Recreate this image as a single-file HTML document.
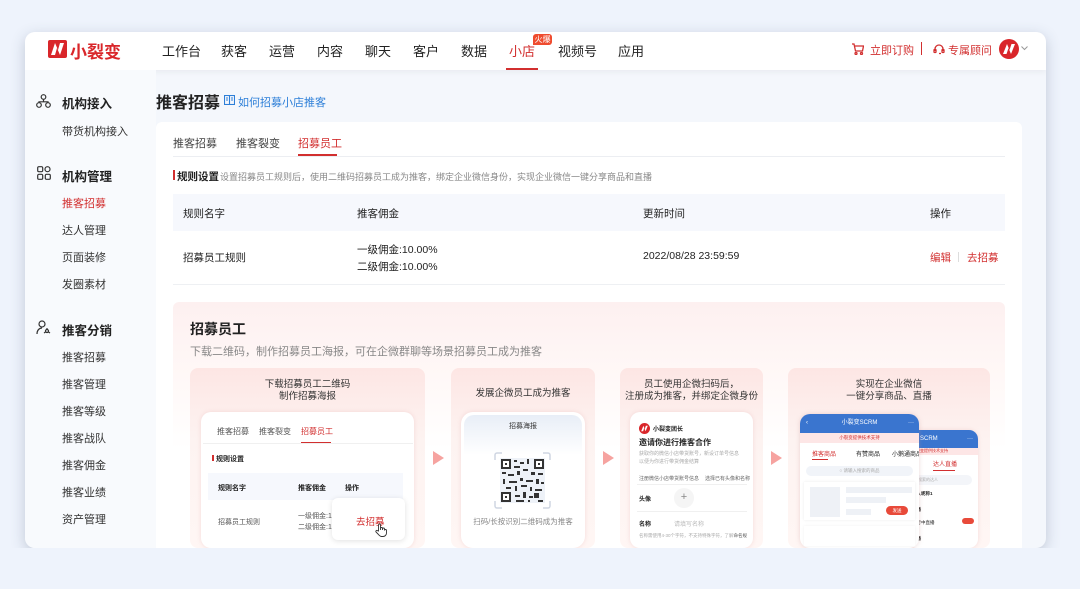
<!DOCTYPE html>
<html><head><meta charset="utf-8"><style>
*{margin:0;padding:0;box-sizing:border-box}
body{width:1080px;height:589px;background:#eef3fc;font-family:"Liberation Sans","Noto Sans CJK SC",sans-serif;position:relative;overflow:hidden;color:#222}
.a{position:absolute;white-space:nowrap}
#win{position:absolute;left:25px;top:32px;width:1021px;height:516px;border-radius:10px;overflow:hidden;background:#f4f7fc;box-shadow:0 4px 14px rgba(60,70,100,.25)}
#win .a{}
.nav{font-size:13px;color:#222;top:41px}
.sb{font-size:11px;color:#333;left:62px}
.sbh{font-size:12.5px;font-weight:bold;color:#222;left:62px}
.red{color:#d22f2f}
</style></head><body>
<div id="win">
<!-- header -->
<div class="a" style="left:0;top:0;width:1021px;height:38px;background:#fff;box-shadow:0 2px 6px rgba(0,0,0,.05)"></div>
<!-- sidebar -->
<div class="a" style="left:0;top:38px;width:131px;height:478px;background:#f8fafd"></div>
<!-- card -->
<div class="a" style="left:131px;top:90px;width:866px;height:440px;background:#fff;border-radius:6px"></div>
</div>

<!-- logo -->
<svg class="a" style="left:48px;top:40px" width="19" height="18" viewBox="0 0 19 18"><rect width="19" height="18" rx="2" fill="#d9262a"/><path d="M3 15 L7 3 L10 10 L12 3 L16 3 L12 15 L9 8 L7 15Z" fill="#fff"/></svg>
<div class="a" style="left:70px;top:38px;font-size:17px;font-weight:bold;color:#d9262a">小裂变</div>

<div class="a nav" style="left:162px">工作台</div>
<div class="a nav" style="left:221px">获客</div>
<div class="a nav" style="left:269px">运营</div>
<div class="a nav" style="left:317px">内容</div>
<div class="a nav" style="left:365px">聊天</div>
<div class="a nav" style="left:413px">客户</div>
<div class="a nav" style="left:461px">数据</div>
<div class="a nav red" style="left:509px">小店</div>
<div class="a" style="left:533px;top:34px;width:19px;height:11px;background:#ef4b2e;border-radius:3px 3px 3px 0;color:#fff;font-size:8px;line-height:11px;text-align:center">火爆</div>
<div class="a" style="left:506px;top:68px;width:32px;height:2px;background:#d22f2f"></div>
<div class="a nav" style="left:558px">视频号</div>
<div class="a nav" style="left:618px">应用</div>

<svg class="a" style="left:851px;top:43px" width="13" height="12" viewBox="0 0 13 12" fill="none" stroke="#d22f2f" stroke-width="1.3"><path d="M1 1h2l1.5 7h7l1-5H4"/><circle cx="5" cy="10.5" r="1"/><circle cx="10.5" cy="10.5" r="1"/></svg>
<div class="a red" style="left:870px;top:42px;font-size:11px">立即订购</div>
<div class="a" style="left:921px;top:42px;width:1px;height:13px;background:#d22f2f"></div>
<svg class="a" style="left:933px;top:43px" width="12" height="12" viewBox="0 0 12 12" fill="none" stroke="#d22f2f" stroke-width="1.3"><path d="M2 8V6a4 4 0 0 1 8 0v2M8 10.5h-2"/><rect x="1" y="6.5" width="2" height="3" rx=".5"/><rect x="9" y="6.5" width="2" height="3" rx=".5"/></svg>
<div class="a red" style="left:948px;top:42px;font-size:11px">专属顾问</div>
<svg class="a" style="left:999px;top:39px" width="20" height="20" viewBox="0 0 20 20"><circle cx="10" cy="10" r="10" fill="#d9262a"/><path d="M4 15 L8 5 L10.5 11 L12.5 5 L16 5 L12 15 L9.5 9 L7.5 15Z" fill="#fff"/></svg>
<svg class="a" style="left:1021px;top:46px" width="7" height="5"><path d="M.5 .5L3.5 3.5L6.5 .5" fill="none" stroke="#999"/></svg>

<!-- sidebar -->
<svg class="a" style="left:36px;top:94px" width="15" height="14" viewBox="0 0 15 14" fill="none" stroke="#333" stroke-width="1.2"><circle cx="7.5" cy="3" r="2.3"/><circle cx="3" cy="11" r="2.3"/><circle cx="12" cy="11" r="2.3"/><path d="M7.5 5.3v2.5M3 8.7V7.8h9v.9"/></svg>
<div class="a sbh" style="top:93px">机构接入</div>
<div class="a sb" style="top:123px">带货机构接入</div>
<svg class="a" style="left:37px;top:166px" width="14" height="14" viewBox="0 0 14 14" fill="none" stroke="#333" stroke-width="1.2"><rect x=".7" y=".7" width="5" height="5" rx="1.2"/><circle cx="10.5" cy="3.2" r="2.5"/><rect x=".7" y="8.3" width="5" height="5" rx="1.2"/><rect x="8.3" y="8.3" width="5" height="5" rx="1.2"/></svg>
<div class="a sbh" style="top:166px">机构管理</div>
<div class="a sb red" style="top:195px">推客招募</div>
<div class="a sb" style="top:222px">达人管理</div>
<div class="a sb" style="top:249px">页面装修</div>
<div class="a sb" style="top:276px">发圈素材</div>
<svg class="a" style="left:36px;top:320px" width="16" height="15" viewBox="0 0 16 15" fill="none" stroke="#333" stroke-width="1.2"><circle cx="6" cy="4" r="3"/><path d="M1 14c0-3.5 2-6 5-6"/><circle cx="11" cy="11" r="1.5"/><path d="M8 13l1.5-1M14 13l-1.5-1M11 8v1.5"/></svg>
<div class="a sbh" style="top:320px">推客分销</div>
<div class="a sb" style="top:349px">推客招募</div>
<div class="a sb" style="top:376px">推客管理</div>
<div class="a sb" style="top:403px">推客等级</div>
<div class="a sb" style="top:430px">推客战队</div>
<div class="a sb" style="top:457px">推客佣金</div>
<div class="a sb" style="top:484px">推客业绩</div>
<div class="a sb" style="top:511px">资产管理</div>

<!-- title -->
<div class="a" style="left:156px;top:89px;font-size:16px;font-weight:bold;color:#222">推客招募</div>
<svg class="a" style="left:224px;top:95px" width="11" height="10" viewBox="0 0 11 10" fill="none" stroke="#2d7fd8" stroke-width="1.1"><rect x=".5" y=".5" width="10" height="9"/><path d="M5.5 .5v9M2 3h2M2 5h2M7 3h2M7 5h2"/></svg>
<div class="a" style="left:238px;top:94px;font-size:11px;color:#2d7fd8">如何招募小店推客</div>

<!-- tabs -->
<div class="a" style="left:173px;top:135px;font-size:11px;color:#444">推客招募</div>
<div class="a" style="left:236px;top:135px;font-size:11px;color:#444">推客裂变</div>
<div class="a red" style="left:298px;top:135px;font-size:11px">招募员工</div>
<div class="a" style="left:173px;top:156px;width:832px;height:1px;background:#eceef2"></div>
<div class="a" style="left:298px;top:154px;width:39px;height:2px;background:#d22f2f"></div>

<div class="a" style="left:173px;top:170px;width:2px;height:10px;background:#d22f2f"></div>
<div class="a" style="left:177px;top:169px;font-size:10.5px;font-weight:bold">规则设置</div>
<div class="a" style="left:220px;top:170px;font-size:9px;color:#888">设置招募员工规则后，使用二维码招募员工成为推客，绑定企业微信身份，实现企业微信一键分享商品和直播</div>

<div class="a" style="left:173px;top:194px;width:832px;height:37px;background:#f6f8fd"></div>
<div class="a" style="left:183px;top:206px;font-size:10.5px">规则名字</div>
<div class="a" style="left:357px;top:206px;font-size:10.5px">推客佣金</div>
<div class="a" style="left:643px;top:206px;font-size:10.5px">更新时间</div>
<div class="a" style="left:930px;top:206px;font-size:10.5px">操作</div>
<div class="a" style="left:183px;top:250px;font-size:10.5px">招募员工规则</div>
<div class="a" style="left:357px;top:242px;font-size:10.5px">一级佣金:10.00%</div>
<div class="a" style="left:357px;top:259px;font-size:10.5px">二级佣金:10.00%</div>
<div class="a" style="left:643px;top:250px;font-size:10.5px">2022/08/28 23:59:59</div>
<div class="a red" style="left:930px;top:250px;font-size:10.5px">编辑</div>
<div class="a" style="left:958px;top:252px;width:1px;height:10px;background:#ddd"></div>
<div class="a red" style="left:967px;top:250px;font-size:10.5px">去招募</div>
<div class="a" style="left:173px;top:284px;width:832px;height:1px;background:#eef0f3"></div>

<!-- pink section -->
<div class="a" style="left:173px;top:302px;width:832px;height:246px;border-radius:6px;background:linear-gradient(180deg,#fdf0f0 0%,#fff8f7 30%,#fff 60%)"></div>
<div class="a" style="left:190px;top:319px;font-size:14px;font-weight:bold">招募员工</div>
<div class="a" style="left:190px;top:343px;font-size:11px;color:#888">下载二维码，制作招募员工海报，可在企微群聊等场景招募员工成为推客</div>

<!-- cards -->
<div class="a" style="left:190px;top:368px;width:235px;height:180px;border-radius:8px;background:linear-gradient(180deg,#fde6e4,#fdf3f1 40%,#fff6f4)"></div>
<div class="a" style="left:451px;top:368px;width:144px;height:180px;border-radius:8px;background:linear-gradient(180deg,#fde6e4,#fdf3f1 40%,#fff6f4)"></div>
<div class="a" style="left:620px;top:368px;width:143px;height:180px;border-radius:8px;background:linear-gradient(180deg,#fde6e4,#fdf3f1 40%,#fff6f4)"></div>
<div class="a" style="left:788px;top:368px;width:202px;height:180px;border-radius:8px;background:linear-gradient(180deg,#fde6e4,#fdf3f1 40%,#fff6f4)"></div>
<svg class="a" style="left:433px;top:451px" width="11" height="14"><path d="M0 0L11 7L0 14Z" fill="#f6a3a0"/></svg>
<svg class="a" style="left:603px;top:451px" width="11" height="14"><path d="M0 0L11 7L0 14Z" fill="#f6a3a0"/></svg>
<svg class="a" style="left:771px;top:451px" width="11" height="14"><path d="M0 0L11 7L0 14Z" fill="#f6a3a0"/></svg>

<!-- card1 -->
<div class="a" style="left:190px;top:379px;width:235px;text-align:center;font-size:9.5px;line-height:12px;color:#333">下载招募员工二维码<br>制作招募海报</div>
<div class="a" style="left:201px;top:412px;width:213px;height:136px;background:#fff;border-radius:10px;box-shadow:0 0 4px rgba(230,180,180,.4)"></div>
<div class="a" style="left:217px;top:426px;font-size:8px;color:#555">推客招募</div>
<div class="a" style="left:259px;top:426px;font-size:8px;color:#555">推客裂变</div>
<div class="a red" style="left:301px;top:426px;font-size:8px">招募员工</div>
<div class="a" style="left:301px;top:442px;width:30px;height:1.5px;background:#d22f2f"></div>
<div class="a" style="left:203px;top:443px;width:210px;height:1px;background:#f0f0f0"></div>
<div class="a" style="left:212px;top:455px;width:1.5px;height:6px;background:#d22f2f"></div>
<div class="a" style="left:216px;top:454px;font-size:7px;font-weight:bold">规则设置</div>
<div class="a" style="left:208px;top:473px;width:195px;height:27px;background:#f6f8fd"></div>
<div class="a" style="left:218px;top:483px;font-size:7px;font-weight:bold">规则名字</div>
<div class="a" style="left:298px;top:483px;font-size:7px;font-weight:bold">推客佣金</div>
<div class="a" style="left:345px;top:483px;font-size:7px;font-weight:bold">操作</div>
<div class="a" style="left:218px;top:517px;font-size:7px;color:#555">招募员工规则</div>
<div class="a" style="left:298px;top:511px;font-size:7px;color:#555">一级佣金:1C</div>
<div class="a" style="left:298px;top:522px;font-size:7px;color:#555">二级佣金:1C</div>
<div class="a" style="left:332px;top:498px;width:73px;height:42px;background:#fff;border-radius:6px;box-shadow:0 1px 6px rgba(0,0,0,.12)"></div>
<div class="a red" style="left:356px;top:514px;font-size:9.5px">去招募</div>
<svg class="a" style="left:375px;top:523px" width="12" height="14" viewBox="0 0 12 14" fill="#fff" stroke="#333" stroke-width=".9"><path d="M3.5 8V2a1 1 0 0 1 2 0v5V5.5a1 1 0 0 1 2 0V7V6a1 1 0 0 1 2 0v1.5a1 1 0 0 1 2 0V10c0 2-1.5 3.5-3.5 3.5H6.5C5 13.5 4 12 2.5 10.5L1 9a1 1 0 0 1 1.5-1.3z"/></svg>

<!-- card2 -->
<div class="a" style="left:451px;top:385px;width:144px;text-align:center;font-size:9.5px;color:#333">发展企微员工成为推客</div>
<div class="a" style="left:461px;top:412px;width:124px;height:136px;background:#fff;border-radius:12px;box-shadow:0 0 4px rgba(230,180,180,.4)"></div>
<div class="a" style="left:464px;top:415px;width:118px;height:40px;border-radius:10px 10px 0 0;background:linear-gradient(180deg,#e8eef7,#fff)"></div>
<div class="a" style="left:461px;top:421px;width:124px;text-align:center;font-size:7px;color:#333">招募海报</div>
<svg class="a" style="left:494px;top:452px" width="57" height="57" viewBox="0 0 57 57">
<path d="M1 8V3a2 2 0 0 1 2-2h5M49 1h5a2 2 0 0 1 2 2v5M56 49v5a2 2 0 0 1-2 2h-5M8 56H3a2 2 0 0 1-2-2v-5" stroke="#cfd6e2" stroke-width="1.5" fill="none"/>
<rect x="6" y="6" width="45" height="45" fill="#eef2f8"/>
<g fill="#333"><rect x="7" y="7" width="10" height="10"/><rect x="40" y="7" width="10" height="10"/><rect x="7" y="40" width="10" height="10"/></g>
<g fill="#fff"><rect x="9" y="9" width="6" height="6"/><rect x="42" y="9" width="6" height="6"/><rect x="9" y="42" width="6" height="6"/></g>
<g fill="#333"><rect x="11" y="11" width="2" height="2"/><rect x="44" y="11" width="2" height="2"/><rect x="11" y="44" width="2" height="2"/>
<rect x="20" y="8" width="3" height="2"/><rect x="26" y="10" width="4" height="2"/><rect x="33" y="7" width="2" height="5"/><rect x="20" y="14" width="6" height="2"/><rect x="8" y="20" width="4" height="2"/><rect x="14" y="22" width="6" height="2"/><rect x="23" y="19" width="3" height="4"/><rect x="29" y="17" width="5" height="2"/><rect x="37" y="20" width="4" height="3"/><rect x="44" y="21" width="5" height="2"/><rect x="9" y="27" width="2" height="5"/><rect x="15" y="29" width="8" height="2"/><rect x="26" y="26" width="3" height="3"/><rect x="32" y="28" width="7" height="2"/><rect x="42" y="27" width="3" height="5"/><rect x="47" y="30" width="3" height="2"/><rect x="12" y="35" width="5" height="2"/><rect x="21" y="34" width="2" height="5"/><rect x="27" y="33" width="6" height="2"/><rect x="36" y="35" width="2" height="4"/><rect x="41" y="37" width="7" height="2"/><rect x="21" y="43" width="5" height="2"/><rect x="29" y="40" width="3" height="6"/><rect x="35" y="44" width="4" height="2"/><rect x="40" y="41" width="5" height="5"/><rect x="22" y="48" width="8" height="2"/><rect x="34" y="48" width="2" height="2"/><rect x="44" y="48" width="5" height="2"/></g>
</svg>
<div class="a" style="left:461px;top:516px;width:124px;text-align:center;font-size:7.5px;color:#888">扫码/长按识别二维码成为推客</div>

<!-- card3 -->
<div class="a" style="left:620px;top:379px;width:143px;text-align:center;font-size:9.5px;line-height:12px;color:#333">员工使用企微扫码后，<br>注册成为推客，并绑定企微身份</div>
<div class="a" style="left:630px;top:412px;width:123px;height:136px;background:#fff;border-radius:10px;box-shadow:0 0 4px rgba(230,180,180,.4)"></div>
<svg class="a" style="left:639px;top:423px" width="11" height="11" viewBox="0 0 20 20"><circle cx="10" cy="10" r="10" fill="#d9262a"/><path d="M4 15 L8 5 L10.5 11 L12.5 5 L16 5 L12 15 L9.5 9 L7.5 15Z" fill="#fff"/></svg>
<div class="a" style="left:653px;top:424px;font-size:6px;font-weight:bold">小裂变团长</div>
<div class="a" style="left:639px;top:437px;font-size:8px;font-weight:bold">邀请你进行推客合作</div>
<div class="a" style="left:639px;top:450px;font-size:5px;color:#aaa;line-height:8px">获取你的微信小店带货账号，新设订单号信息<br>以便为你进行带货佣金结算</div>
<div class="a" style="left:639px;top:475px;font-size:5px;color:#666">注册微信小店带货账号信息</div>
<div class="a" style="left:705px;top:475px;font-size:5px;color:#666">选择已有头像和名称</div>
<div class="a" style="left:637px;top:484px;width:110px;height:1px;background:#f0f0f0"></div>
<div class="a" style="left:639px;top:494px;font-size:6px;font-weight:bold">头像</div>
<div class="a" style="left:674px;top:488px;width:20px;height:20px;border-radius:50%;background:#f5f5f5;color:#888;font-size:11px;line-height:19px;text-align:center">+</div>
<div class="a" style="left:637px;top:511px;width:110px;height:1px;background:#f0f0f0"></div>
<div class="a" style="left:639px;top:519px;font-size:6px;font-weight:bold">名称</div>
<div class="a" style="left:674px;top:519px;font-size:6px;color:#bbb">请填写名称</div>
<div class="a" style="left:639px;top:533px;font-size:4.5px;color:#aaa">名称需使用4-30个字符，不支持特殊字符，了解<span style="color:#555">命名规</span></div>

<!-- card4 -->
<div class="a" style="left:788px;top:379px;width:202px;text-align:center;font-size:9.5px;line-height:12px;color:#333">实现在企业微信<br>一键分享商品、直播</div>
<div class="a" style="left:908px;top:430px;width:70px;height:118px;background:#fff;border-radius:9px;box-shadow:0 0 4px rgba(230,180,180,.4);overflow:hidden">
 <div style="height:18px;background:#3a75cf;color:#fff;font-size:6px;line-height:18px;padding-left:12px">SCRM <span style="float:right;margin-right:5px">···</span></div>
 <div style="height:7px;background:#fde6e6;font-size:4px;color:#d22f2f;padding-left:4px">微裂变提供技术支持</div>
 <div style="font-size:6px;color:#d22f2f;margin:4px 0 0 25px">达人直播</div>
 <div style="width:22px;height:1px;background:#d22f2f;margin:2px 0 0 25px"></div>
 <div style="height:10px;background:#f3f5f9;border-radius:5px;margin:4px 6px 0 -4px;font-size:4px;color:#aaa;line-height:10px;padding-left:10px">入搜索的达人</div>
 <div style="font-size:4.5px;font-weight:bold;margin:6px 0 0 4px">达人昵称1</div>
 <div style="font-size:4.5px;font-weight:bold;margin:10px 0 0 4px">直播</div>
 <div style="font-size:4.5px;margin:5px 0 0 4px">进行中直播 <span style="display:inline-block;width:12px;height:6px;background:#e84a3a;border-radius:3px;margin-left:26px"></span></div>
 <div style="font-size:4.5px;font-weight:bold;margin:10px 0 0 4px">直播</div>
</div>
<div class="a" style="left:800px;top:414px;width:119px;height:134px;background:#fff;border-radius:10px;box-shadow:0 0 5px rgba(200,150,150,.35);overflow:hidden">
 <div style="height:19px;background:#3a75cf;color:#fff;font-size:6px;line-height:19px;text-align:center;position:relative">小裂变SCRM<span style="position:absolute;left:6px">‹</span><span style="position:absolute;right:5px">···</span></div>
 <div style="height:10px;background:#fde6e6;font-size:4.5px;color:#d22f2f;text-align:center;line-height:10px">小裂变提供技术支持</div>
 <div style="font-size:6px;margin:6px 0 0 10px;position:relative;height:10px"><span style="color:#d22f2f;position:absolute;left:2px">推客商品</span><span style="position:absolute;left:46px">有赞商品</span><span style="position:absolute;left:82px">小鹅通商品</span></div>
 <div style="width:16px;height:1px;background:#d22f2f;margin:0 0 0 12px"></div>
 <div style="height:10px;background:#f1f4f9;border-radius:5px;margin:6px 6px 0;font-size:4.5px;color:#aaa;line-height:10px;text-align:center">○ 请输入搜索的商品</div>
 <div style="margin:6px 4px 0;height:38px;background:#fff;box-shadow:0 0 3px rgba(0,0,0,.08);position:relative">
  <div style="position:absolute;left:6px;top:5px;width:30px;height:30px;background:#eef1f6"></div>
  <div style="position:absolute;left:42px;top:5px;width:66px;height:6px;background:#eef1f6"></div>
  <div style="position:absolute;left:42px;top:15px;width:40px;height:6px;background:#eef1f6"></div>
  <div style="position:absolute;left:42px;top:27px;width:25px;height:6px;background:#eef1f6"></div>
  <div style="position:absolute;left:82px;top:24px;width:22px;height:9px;background:#e84a3a;border-radius:5px;font-size:4.5px;color:#fff;text-align:center;line-height:9px">发送</div>
 </div>
 <div style="margin:6px 4px 0;height:20px;background:#fff;box-shadow:0 0 3px rgba(0,0,0,.06)"></div>
</div>

<!-- window bottom mask -->
<div class="a" style="left:0;top:548px;width:1080px;height:41px;background:#eef3fc"></div>
</body></html>
